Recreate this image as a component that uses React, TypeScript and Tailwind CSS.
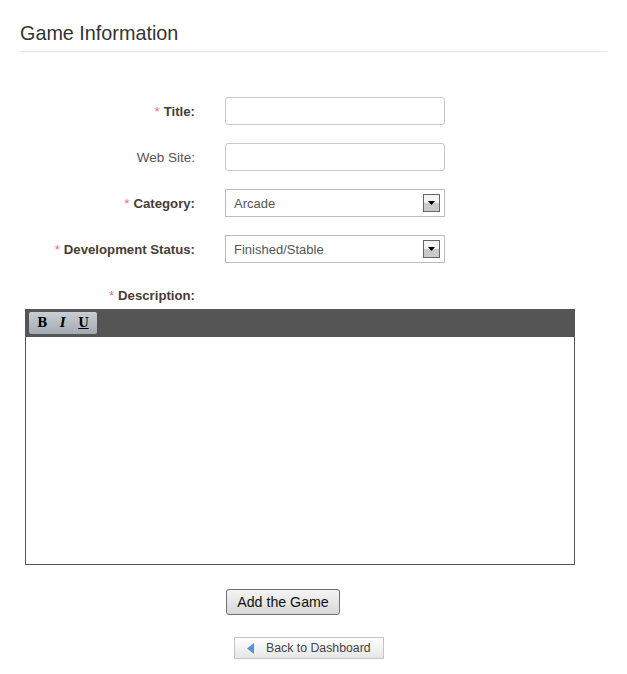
import React from 'react'

const font = { fontFamily: '"Liberation Sans", Arial, sans-serif' }

function Label({ text, required }: { text: string; required?: boolean }) {
  return (
    <label className={`w-[175px] pt-px text-right leading-[28px] ${required ? 'text-[13.2px] font-bold text-[#4a3c36]' : 'text-[13.5px] text-[#555555]'}`}>
      {required && <span className="mr-1 font-normal text-[#f564a9]">*</span>}
      {text}
    </label>
  )
}

function TextRow({ text, required }: { text: string; required?: boolean }) {
  return (
    <div className="flex h-[28px] items-center gap-[30px]">
      <Label text={text} required={required} />
      <div className="h-[28px] w-[220px] rounded-[3px] border border-[#c8c8c8] bg-white" />
    </div>
  )
}

function SelectRow({ text, value }: { text: string; value: string }) {
  return (
    <div className="flex h-[28px] items-center gap-[30px]">
      <Label text={text} required />
      <div className="flex h-[28px] w-[220px] items-center justify-between border border-[#bdbdbd] bg-white pl-2 pr-[4px]">
        <span className="pt-px text-[13px] text-[#555555]">{value}</span>
        <div className="flex h-[18px] w-[17px] items-center justify-center border border-[#666666] bg-gradient-to-b from-[#f4f4f4] from-50% to-[#cacaca] to-50%">
          <svg width="7" height="4" viewBox="0 0 7 4"><path d="M0 0h7L3.500 4z" fill="#000" /></svg>
        </div>
      </div>
    </div>
  )
}

export default function App() {
  return (
    <div className="min-h-[674px] bg-white px-5 pt-[20px]" style={font}>
      <h1 className="h-[32px] w-[587px] border-b border-[#e5e5e5] text-[19.8px] leading-[26px] text-[#333333]">Game Information</h1>

      <form className="mt-[45px] flex flex-col gap-[18px]">
        <TextRow text="Title:" required />
        <TextRow text="Web Site:" />
        <SelectRow text="Category:" value="Arcade" />
        <SelectRow text="Development Status:" value="Finished/Stable" />
      </form>

      <div className="mt-[18px] h-[28px] w-[175px] pt-px text-right text-[13.2px] font-bold leading-[28px] text-[#4a3c36]">
        <span className="mr-1 font-normal text-[#f564a9]">*</span>Description:
      </div>

      <div className="ml-[5px] h-[256px] w-[550px] border border-t-0 border-[#555555] bg-white">
        <div className="-ml-px flex h-[28px] w-[550px] items-start bg-[#555555] pl-[4px] pt-[3px]">
          <div className="flex h-[22px] w-[68px] items-center justify-around rounded-[2px] bg-gradient-to-b from-[#c9ced4] to-[#a4aab2] px-[2px] text-[12px] text-black" style={{ fontFamily: '"DejaVu Serif", serif' }}>
            <span className="font-bold">B</span>
            <span className="font-bold italic">I</span>
            <span className="font-bold underline">U</span>
          </div>
        </div>
      </div>

      <div className="ml-[206px] mt-[24px] flex h-[26px] w-[114px] items-center justify-center rounded-[3px] border border-[#707070] bg-gradient-to-b from-[#f4f4f4] to-[#d8d8d8] pt-px text-[14.2px] text-[#111111]">
        Add the Game
      </div>

      <div className="ml-[214px] mt-[22px] flex h-[22px] w-[150px] items-center border border-[#c4c4c4] bg-gradient-to-b from-white to-[#e6e6e6] pl-[12px] text-[12.3px] text-[#444444]">
        <svg width="7" height="11" viewBox="0 0 7 11" className="mr-[12px]"><path d="M7 0v11L0 5.500z" fill="#5b8fd6" /></svg>
        Back to Dashboard
      </div>
    </div>
  )
}
